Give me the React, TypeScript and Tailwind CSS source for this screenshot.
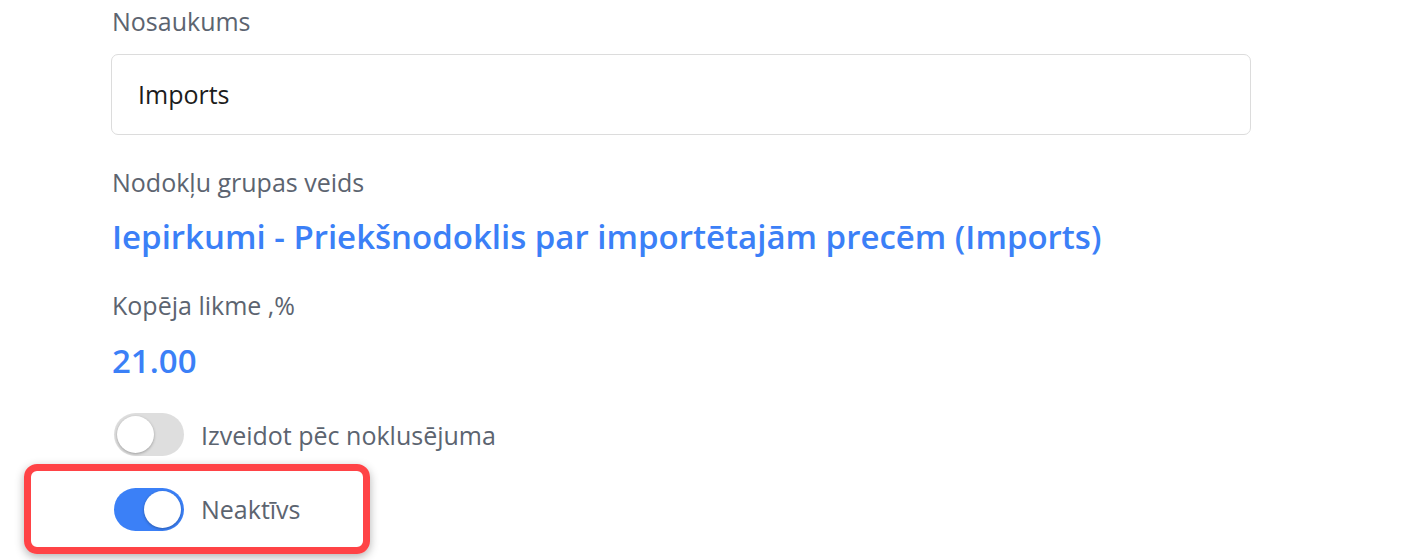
import React from 'react';

function Toggle({ on }: { on: boolean }) {
  return (
    <div
      className={
        on
          ? 'relative w-[70px] h-[43px] rounded-full bg-[#3b80f7] shrink-0'
          : 'relative w-[70px] h-[43px] rounded-full bg-[#dedede] shrink-0'
      }
    >
      <div
        className={
          on
            ? 'absolute top-[3px] right-[3px] w-[37px] h-[37px] rounded-full bg-white shadow-[0_1px_3px_rgba(0,0,0,0.3)]'
            : 'absolute top-[3px] left-[3px] w-[37px] h-[37px] rounded-full bg-white shadow-[0_1px_3px_rgba(0,0,0,0.3)]'
        }
      />
    </div>
  );
}

export default function App() {
  return (
    <div
      className="w-[1415px] h-[560px] bg-white overflow-hidden text-[#5c6470]"
      style={{ fontFamily: '"Open Sans", sans-serif' }}
    >
      <div className="pl-[111px] pt-[4px] w-[1251px]">
        <div className="text-[25px] leading-[34px] pl-[1px]">Nosaukums</div>
        <div className="mt-[16px] h-[81px] border border-[#dcdcdc] rounded-[7px] flex items-center px-[26px] text-[25px] text-[#1c1c1c]">
          Imports
        </div>
        <div className="mt-[30px] text-[25px] leading-[34px] pl-[1px]">Nodokļu grupas veids</div>
        <div className="mt-[16px] text-[33px] leading-[44px] font-semibold text-[#3b80f7] pl-[1px]">
          Iepirkumi - Priekšnodoklis par importētajām precēm (Imports)
        </div>
        <div className="mt-[29px] text-[25px] leading-[34px] pl-[1px]">Kopēja likme ,%</div>
        <div className="mt-[17px] text-[33px] leading-[44px] font-semibold text-[#3b80f7] pl-[1px]">21.00</div>
      </div>
      <div className="pl-[114px] mt-[30px] flex items-center gap-[17px]">
        <Toggle on={false} />
        <span className="text-[25px] leading-[34px]">Izveidot pēc noklusējuma</span>
      </div>
      <div className="ml-[24px] mt-[8px] w-[346px] h-[90px] border-[7px] border-[#ff4346] rounded-[13px] shadow-[0_3px_10px_rgba(0,0,0,0.3)] flex items-center pl-[83px] gap-[17px]">
        <Toggle on={true} />
        <span className="text-[25px] leading-[34px]">Neaktīvs</span>
      </div>
    </div>
  );
}
